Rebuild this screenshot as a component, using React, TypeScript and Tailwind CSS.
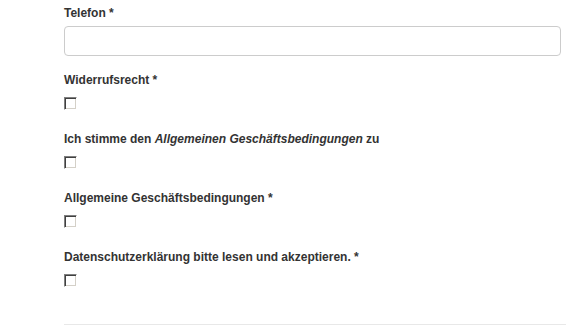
import React from "react";

function ClassicCheckbox() {
  return (
    <span className="block w-[13px] h-[13px] bg-white border border-t-[#808080] border-l-[#808080] border-r-white border-b-white shadow-[inset_1px_1px_0_#404040,inset_-1px_-1px_0_#d4d0c8]" />
  );
}

function CheckField({ label }: { label: React.ReactNode }) {
  return (
    <div className="mb-[20px]">
      <label className="block font-bold leading-[18px] text-[#333]">{label}</label>
      <div className="mt-[8px]">
        <ClassicCheckbox />
      </div>
    </div>
  );
}

export default function App() {
  return (
    <div
      className="w-[566px] h-[336px] overflow-hidden bg-white pl-[64px] pt-[4px] text-[12px] text-[#333]"
      style={{ fontFamily: '"Liberation Sans", Arial, sans-serif' }}
    >
      <div className="mb-[15px]">
        <label className="block font-bold leading-[18px]">Telefon *</label>
        <input
          type="text"
          className="mt-[4px] block w-[497px] h-[30px] border border-[#cccccc] rounded-[4px] bg-white px-2 outline-none"
        />
      </div>

      <CheckField label="Widerrufsrecht *" />
      <CheckField
        label={
          <>
            Ich stimme den <em>Allgemeinen Geschäftsbedingungen</em> zu
          </>
        }
      />
      <CheckField label="Allgemeine Geschäftsbedingungen *" />
      <div>
        <label className="block font-bold leading-[18px]">
          Datenschutzerklärung bitte lesen und akzeptieren. *
        </label>
        <div className="mt-[8px]">
          <ClassicCheckbox />
        </div>
      </div>

      <div className="mt-[37px] h-px w-[510px] bg-[#e8e8e8]" />
    </div>
  );
}
